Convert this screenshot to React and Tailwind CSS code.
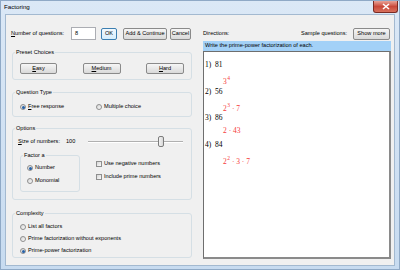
import React from "react";

function Btn({ children, className = "", focused = false }) {
  return (
    <div
      className={
        "h-[12px] flex items-center justify-center rounded-[2px] border leading-none " +
        (focused
          ? "border-[#3c7fb1] bg-gradient-to-b from-[#f2f9fe] to-[#d6eefc] "
          : "border-[#8a8a8a] bg-gradient-to-b from-[#f6f6f6] to-[#d9d9d9] ") +
        className
      }
    >
      {children}
    </div>
  );
}

function Radio({ checked = false, children }) {
  return (
    <div className="flex items-center h-[8px]">
      <span className="w-[6px] h-[6px] rounded-full border border-[#8e8f8f] bg-gradient-to-br from-[#d6d6d6] to-[#fbfbfb] flex items-center justify-center shrink-0">
        {checked && <span className="w-[3px] h-[3px] rounded-full bg-[#2561a8]" />}
      </span>
      <span className="ml-[2px] leading-none">{children}</span>
    </div>
  );
}

function Check({ children }) {
  return (
    <div className="flex items-center h-[8px]">
      <span className="w-[6px] h-[6px] border border-[#8e8f8f] bg-gradient-to-br from-[#d6d6d6] to-[#fbfbfb] shrink-0" />
      <span className="ml-[2px] leading-none">{children}</span>
    </div>
  );
}

function Group({ title, className = "", children }) {
  return (
    <fieldset className={"border border-[#d5dfe5] rounded-[3px] " + className}>
      <legend className="ml-[2px] px-[1px] leading-[8px]">{title}</legend>
      {children}
    </fieldset>
  );
}

function Item({ n, q, children }) {
  return (
    <div>
      <div className="h-[10px] leading-[10px] flex">
        <span className="w-[10px]">{n})</span>
        <span>{q}</span>
      </div>
      <div className="mt-[3px] h-[10px] leading-[10px] pl-[18px] text-[#f53b3b]">{children}</div>
    </div>
  );
}

function Sup({ children }) {
  return <span className="text-[5.5px] align-[3.5px] ml-[0.5px]">{children}</span>;
}

export default function App() {
  return (
    <div className="w-[400px] h-[270px] flex flex-col bg-gradient-to-b from-[#dbe8f6] to-[#c7dbf0] border border-[#8fa9c6] overflow-hidden font-['Liberation_Sans',Arial,sans-serif] text-[5.6px] text-black">
      {/* Title bar */}
      <div className="h-[13px] flex items-start shrink-0">
        <span className="ml-[3px] mt-[3px] text-[6.2px] leading-none">Factoring</span>
        <div className="ml-auto mr-[1px] w-[25px] h-[12px] rounded-b-[3px] border border-[#7a2a22] border-t-0 bg-gradient-to-b from-[#e7a398] via-[#c9483a] to-[#d7705c] flex items-center justify-center">
          <svg width="8" height="7" viewBox="0 0 8 7">
            <path d="M1 1 L7 6 M7 1 L1 6" stroke="#ffffff" strokeWidth="1.6" />
          </svg>
        </div>
      </div>

      {/* Client area */}
      <div className="flex-1 mx-[4px] mb-[3px] bg-[#f0f0f0] border border-[#a3b9d0] flex">
        {/* Left column */}
        <div className="w-[190px] shrink-0 flex flex-col">
          <div className="mt-[12px] h-[13px] flex items-center pl-[5px]">
            <span className="w-[60px] leading-none">
              <span className="underline">N</span>umber of questions:
            </span>
            <div className="w-[25px] h-[13px] bg-white border border-[#abadb3] flex items-center pl-[3px] leading-none">8</div>
            <Btn focused className="ml-[5px] w-[16px]">OK</Btn>
            <Btn className="ml-[6px] w-[44px]">Add &amp; Continue</Btn>
            <Btn className="ml-[3px] w-[21px]">Cancel</Btn>
          </div>

          <div className="pl-[6px] flex flex-col">
            <Group title="Preset Choices" className="mt-[8px] w-[180px]">
              <div className="mt-[7px] mb-[5px] flex justify-between px-[7px]">
                <Btn className="w-[37px] !h-[11px]"><span className="underline">E</span>asy</Btn>
                <Btn className="w-[38px] !h-[11px]"><span className="underline">M</span>edium</Btn>
                <Btn className="w-[38px] !h-[11px]"><span className="underline">H</span>ard</Btn>
              </div>
            </Group>

            <Group title="Question Type" className="mt-[8px] w-[180px]">
              <div className="mt-[7px] mb-[5px] flex pl-[7px]">
                <div className="w-[76px]">
                  <Radio checked><span className="underline">F</span>ree response</Radio>
                </div>
                <Radio>Multiple choice</Radio>
              </div>
            </Group>

            <Group title="Options" className="mt-[7px] w-[180px]">
              <div className="mt-[4px] h-[12px] flex items-center pl-[5px]">
                <span className="leading-none w-[48px]">
                  <span className="underline">S</span>ize of numbers:
                </span>
                <span className="leading-none w-[22px]">100</span>
                <div className="relative w-[95px] h-[12px]">
                  <div className="absolute left-0 right-0 top-[5px] h-[2px] border-t border-[#b0b0b0] border-b border-b-white" />
                  <div className="absolute left-[70px] top-0 w-[6px] h-[11px] rounded-[2px] border border-[#7c7c7c] bg-gradient-to-r from-[#f4f4f4] to-[#d8d8d8]" />
                </div>
              </div>
              <div className="flex mt-[3px] mb-[7px]">
                <Group title="Factor a" className="ml-[7px] w-[60px]">
                  <div className="mt-[5px] mb-[6px] pl-[6px] flex flex-col gap-[5px]">
                    <Radio checked>Number</Radio>
                    <Radio>Monomial</Radio>
                  </div>
                </Group>
                <div className="ml-[16px] mt-[9px] flex flex-col gap-[5px]">
                  <Check>Use negative numbers</Check>
                  <Check>Include prime numbers</Check>
                </div>
              </div>
            </Group>

            <Group title="Complexity" className="mt-[9px] w-[180px]">
              <div className="mt-[6px] mb-[2px] pl-[7px] flex flex-col gap-[4px]">
                <Radio>List all factors</Radio>
                <Radio>Prime factorization without exponents</Radio>
                <Radio checked>Prime-power factorization</Radio>
              </div>
            </Group>
          </div>
        </div>

        {/* Right column */}
        <div className="flex-1 flex flex-col pl-[7px] pr-[3px] pb-[6px]">
          <div className="mt-[13px] h-[12px] flex items-center">
            <span className="leading-none">Directions:</span>
            <span className="ml-auto leading-none">Sample questions:</span>
            <Btn className="ml-[6px] w-[37px] mr-[1px]">Show more</Btn>
          </div>
          <div className="mt-[1px] h-[10px] bg-[#a3d1f7] flex items-center pl-[2px] leading-none">
            Write the prime-power factorization of each.
          </div>
          <div className="flex-1 bg-white border border-[#6e6e6e] border-r-[2px] border-b-[2px] border-r-[#8a8a8a] border-b-[#8a8a8a] pt-[8px] pl-[1px] font-['Liberation_Serif','Times_New_Roman',serif] text-[7.5px] flex flex-col gap-[3.6px]">
            <Item n="1" q="81">3<Sup>4</Sup></Item>
            <Item n="2" q="56">2<Sup>3</Sup> · 7</Item>
            <Item n="3" q="86">2 · 43</Item>
            <Item n="4" q="84">2<Sup>2</Sup> · 3 · 7</Item>
          </div>
        </div>
      </div>
    </div>
  );
}
